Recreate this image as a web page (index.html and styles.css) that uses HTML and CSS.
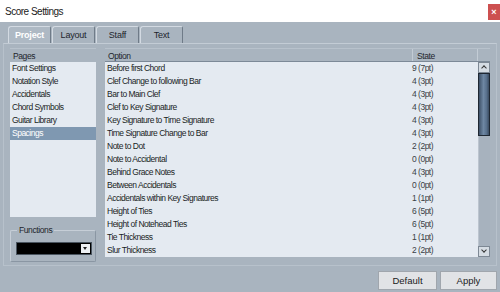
FILE: index.html
```html
<!DOCTYPE html>
<html lang="en">
<head>
  <meta charset="UTF-8">
  <title>Score Settings</title>
  <link rel="stylesheet" href="styles.css">
</head>
<body>
  <div class="titlebar">
    <span class="title">Score Settings</span>
    <span class="close">&times;</span>
  </div>

  <div class="tabs">
    <div class="tab active">Project</div>
    <div class="tab">Layout</div>
    <div class="tab">Staff</div>
    <div class="tab">Text</div>
  </div>

  <div class="panel">
    <div class="left">
      <div class="head">Pages</div>
      <div class="pages">
        <div class="item">Font Settings</div>
        <div class="item">Notation Style</div>
        <div class="item">Accidentals</div>
        <div class="item">Chord Symbols</div>
        <div class="item">Guitar Library</div>
        <div class="item selected">Spacings</div>
      </div>
      <div class="functions">
        <span class="legend">Functions</span>
        <div class="select"><span class="arrow"></span></div>
      </div>
    </div>

    <div class="right">
      <div class="head table-head">
        <span class="col-option">Option</span>
        <span class="col-state">State</span>
        <span class="col-pad"></span>
      </div>
      <div class="table-body">
        <div class="rows" id="rows"></div>
        <div class="scrollbar">
          <div class="sb-btn up"></div>
          <div class="thumb"></div>
          <div class="track"></div>
          <div class="sb-btn down"></div>
        </div>
      </div>
    </div>
  </div>

  <div class="footer">
    <button class="btn default">Default</button>
    <button class="btn apply">Apply</button>
  </div>

  <script>
    // spacing options on the Spacings page
    const options = [
      ['Before first Chord', '9 (7pt)'],
      ['Clef Change to following Bar', '4 (3pt)'],
      ['Bar to Main Clef', '4 (3pt)'],
      ['Clef to Key Signature', '4 (3pt)'],
      ['Key Signature to Time Signature', '4 (3pt)'],
      ['Time Signature Change to Bar', '4 (3pt)'],
      ['Note to Dot', '2 (2pt)'],
      ['Note to Accidental', '0 (0pt)'],
      ['Behind Grace Notes', '4 (3pt)'],
      ['Between Accidentals', '0 (0pt)'],
      ['Accidentals within Key Signatures', '1 (1pt)'],
      ['Height of Ties', '6 (5pt)'],
      ['Height of Notehead Ties', '6 (5pt)'],
      ['Tie Thickness', '1 (1pt)'],
      ['Slur Thickness', '2 (2pt)']
    ];

    const rows = document.getElementById('rows');
    for (const [name, state] of options) {
      const row = document.createElement('div');
      row.className = 'row';
      row.innerHTML = `<span class="col-option">${name}</span><span class="col-state">${state}</span>`;
      rows.appendChild(row);
    }
  </script>
</body>
</html>
```

FILE: styles.css
```css
body {
  margin: 0;
  width: 500px;
  height: 292px;
  overflow: hidden;
  background: #a9b4bf;
  font-family: "Liberation Sans", Arial, sans-serif;
  color: #1a1f25;
}
.titlebar {
  height: 22px;
  background: #fff;
  display: flex;
  align-items: flex-start;
}
.title {
  font-size: 10px;
  letter-spacing: -0.5px;
  color: #222;
  padding: 6px 0 0 5px;
}
.close {
  margin-left: auto;
  margin-top: 4px;
  width: 12px;
  height: 16px;
  background: #cd5050;
  color: #fff;
  font-size: 9px;
  font-weight: bold;
  line-height: 16px;
  text-align: center;
}
.tabs {
  display: flex;
  height: 17px;
  margin-top: 4px;
  padding-left: 8px;
}
.tab {
  width: 43px;
  box-sizing: border-box;
  border-top: 1px solid #d3dae2;
  border-left: 1px solid #d3dae2;
  border-right: 1px solid #6f7b88;
  border-radius: 3px 2px 0 0;
  font-size: 9px;
  letter-spacing: -0.2px;
  text-align: center;
  line-height: 16px;
  color: #1e252d;
}
.tab + .tab {
  margin-left: 1px;
}
.tab.active {
  font-weight: bold;
  color: #fff;
  background: #aeb9c4;
}
.panel {
  height: 223px;
  box-sizing: border-box;
  margin: 0 3px;
  border: 1px solid #b7c1cb;
  border-top-color: #c3ccd5;
  padding: 4px 6px 0 6px;
  display: flex;
  gap: 9px;
}
.left {
  width: 86px;
  display: flex;
  flex-direction: column;
}
.right {
  flex: 1;
  display: flex;
  flex-direction: column;
}
.head {
  height: 14px;
  box-sizing: border-box;
  font-size: 8.5px;
  letter-spacing: -0.4px;
  line-height: 14px;
  padding-left: 3px;
  border-top: 1px solid #b8c2cc;
  color: #1e252d;
}
.pages {
  height: 155px;
  background: #e4eaf1;
}
.item, .row {
  height: 13px;
  line-height: 13px;
  font-size: 8.5px;
  letter-spacing: -0.5px;
  padding-left: 2px;
  white-space: nowrap;
}
.item.selected {
  background: #7f98b1;
  color: #fff;
}
.functions {
  position: relative;
  margin-top: 13px;
  height: 32px;
  box-sizing: border-box;
  border: 1px solid #c6ced7;
  border-right-color: #8a96a3;
  border-bottom-color: #8a96a3;
  border-radius: 2px;
  padding: 11px 0 0 5px;
}
.legend {
  position: absolute;
  top: -6px;
  left: 6px;
  padding: 0 2px;
  background: #a9b4bf;
  font-size: 8.5px;
  letter-spacing: -0.4px;
  line-height: 10px;
  color: #1e252d;
}
.select {
  width: 76px;
  height: 13px;
  box-sizing: border-box;
  background: #000;
  border: 1px solid #4a5560;
  display: flex;
  justify-content: flex-end;
  align-items: center;
  padding-right: 1px;
}
.arrow {
  width: 9px;
  height: 9px;
  background: #eef1f4;
  position: relative;
}
.arrow::after {
  content: "";
  position: absolute;
  left: 2px;
  top: 3px;
  border-left: 2.5px solid transparent;
  border-right: 2.5px solid transparent;
  border-top: 3px solid #222;
}
.table-head {
  display: flex;
  padding-left: 0;
  border-bottom: 1px solid #7c8997;
}
.table-head .col-option {
  flex: 1;
  padding-left: 3px;
  border-right: 1px solid #c3ccd5;
}
.table-head .col-state {
  width: 65px;
  padding-left: 4px;
  box-sizing: border-box;
  border-right: 1px solid #c3ccd5;
}
.table-head .col-pad {
  width: 12px;
}
.table-body {
  height: 195px;
  display: flex;
}
.rows {
  flex: 1;
  background: #e4eaf1;
}
.row {
  display: flex;
  padding-left: 0;
}
.row .col-option {
  flex: 1;
  padding-left: 2px;
}
.row .col-state {
  width: 66px;
  color: #3a3f45;
}
.scrollbar {
  width: 12px;
  display: flex;
  flex-direction: column;
  background: #a3aebb;
}
.sb-btn {
  height: 11px;
  box-sizing: border-box;
  background: #d5dce3;
  border: 1px solid #7d8894;
  position: relative;
}
.sb-btn::after {
  content: "";
  position: absolute;
  left: 3px;
  width: 3px;
  height: 3px;
  border-left: 1px solid #333;
  border-top: 1px solid #333;
}
.sb-btn.up::after {
  top: 3px;
  transform: rotate(45deg);
}
.sb-btn.down::after {
  top: 1px;
  transform: rotate(-135deg);
}
.thumb {
  height: 63px;
  box-sizing: border-box;
  border: 1px solid #1e2732;
  background: linear-gradient(to right, #3e5168, #6e87a3 45%, #58708c 75%, #3a4b60);
}
.track {
  flex: 1;
  background: #a7b2be;
  border-left: 1px solid #bcc5cf;
}
.footer {
  display: flex;
  justify-content: flex-end;
  gap: 3px;
  padding: 5px 3px 0 0;
}
.btn {
  height: 19px;
  padding: 0;
  font-family: inherit;
  font-size: 9.5px;
  color: #1a1a1a;
  background: #e1e3e6;
  border: 1px solid #a0a6ad;
}
.btn.default {
  width: 59px;
}
.btn.apply {
  width: 57px;
}
```
